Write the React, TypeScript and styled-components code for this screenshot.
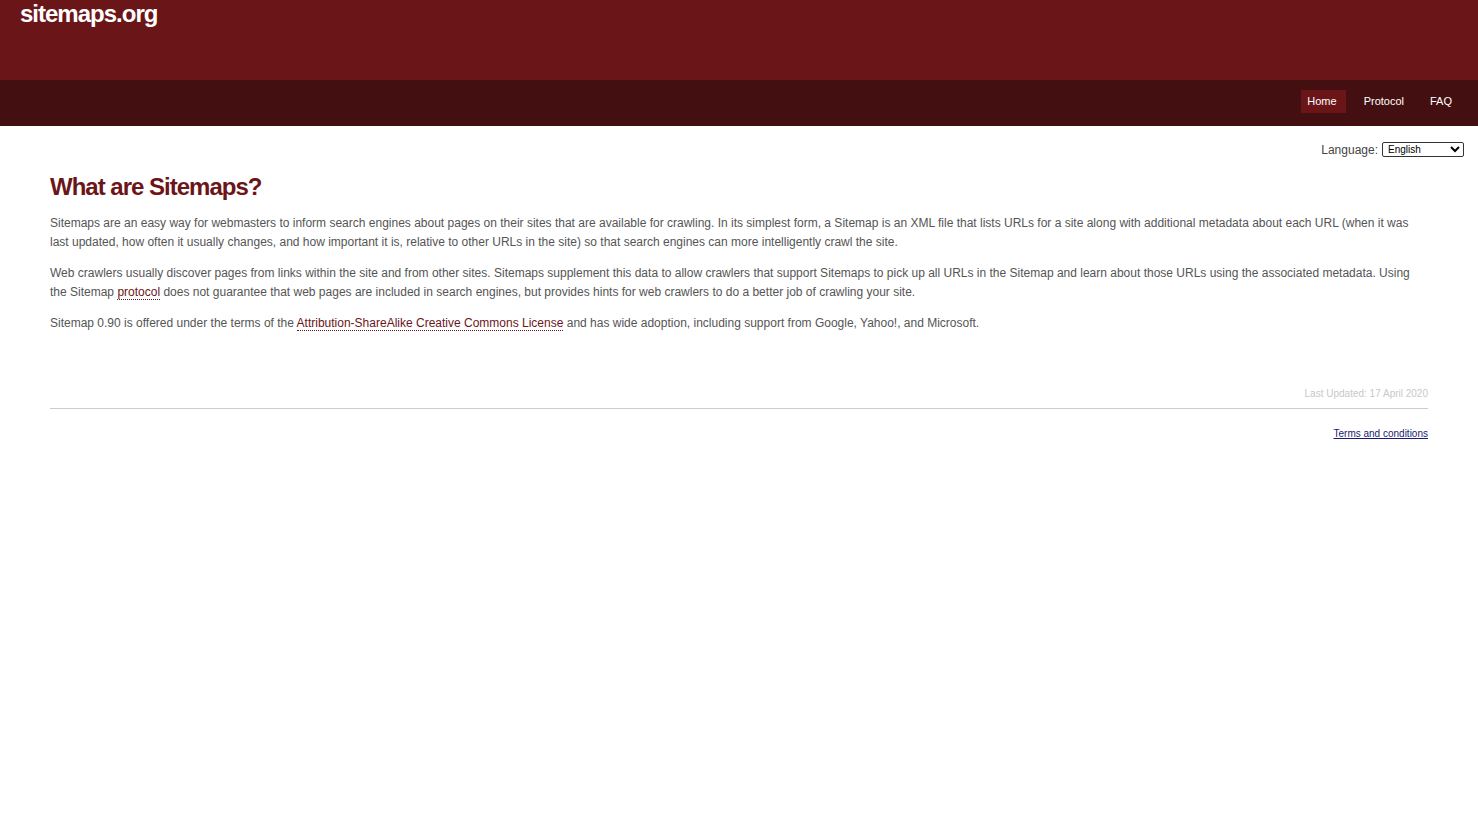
import React from "react";
import styled, { createGlobalStyle } from "styled-components";

const GlobalStyle = createGlobalStyle`
  body {
    margin: 0;
    background: #fff;
    font-family: "Liberation Sans", Arial, sans-serif;
  }
`;

const Header = styled.header`
  background: #6a1619;
  height: 80px;
  padding: 0 20px;
  box-sizing: border-box;
`;

const Logo = styled.div`
  color: #fff;
  font-size: 24px;
  font-weight: bold;
  letter-spacing: -1px;
  line-height: 28px;
`;

const NavBar = styled.nav`
  background: #440f11;
  height: 46px;
  box-sizing: border-box;
  display: flex;
  justify-content: flex-end;
  align-items: flex-start;
  padding: 10px 17px 0 0;
`;

const NavItem = styled.a<{ $active?: boolean; $gap?: number }>`
  font-size: 11px;
  color: #fff;
  text-decoration: none;
  padding: 5px 9px 6px 6px;
  margin-left: ${(p) => p.$gap ?? 0}px;
  line-height: 12px;
  background: ${(p) => (p.$active ? "#6a1619" : "transparent")};
`;

const LangRow = styled.div`
  display: flex;
  justify-content: flex-end;
  align-items: center;
  gap: 4px;
  padding: 16px 14px 0 0;
  font-size: 12px;
  color: #444;
`;

const LangSelect = styled.select`
  width: 82px;
  height: 15px;
  font-size: 10px;
  font-family: "Liberation Sans", Arial, sans-serif;
  padding: 0 0 0 1px;
  border: 1px solid #333;
  border-radius: 2px;
  background: #fff;
`;

const Main = styled.main`
  margin: 0 50px;
`;

const Title = styled.h1`
  color: #6b1519;
  font-size: 24px;
  letter-spacing: -1px;
  margin: 15px 0 12px;
  line-height: 30px;
`;

const Para = styled.p`
  font-size: 12px;
  line-height: 19px;
  color: #555;
  margin: 0 0 12px;
`;

const DotLink = styled.a`
  color: #6b1519;
  text-decoration: none;
  border-bottom: 1px dotted #6b1519;
`;

const Footer = styled.footer`
  margin-top: 55px;
`;

const Updated = styled.div`
  text-align: right;
  font-size: 10px;
  color: #c8c8c8;
  padding-bottom: 9px;
`;

const Rule = styled.hr`
  border: 0;
  border-top: 1px solid #ccc;
  margin: 0;
`;

const Terms = styled.div`
  text-align: right;
  font-size: 10px;
  padding-top: 19px;
  a {
    color: #1a1a6e;
  }
`;

export default function App() {
  return (
    <>
      <GlobalStyle />
      <Header>
        <Logo>sitemaps.org</Logo>
      </Header>
      <NavBar>
        <NavItem $active>Home</NavItem>
        <NavItem $gap={12}>Protocol</NavItem>
        <NavItem $gap={11}>FAQ</NavItem>
      </NavBar>
      <LangRow>
        Language:
        <LangSelect defaultValue="en">
          <option value="en">English</option>
        </LangSelect>
      </LangRow>
      <Main>
        <Title>What are Sitemaps?</Title>
        <Para>
          Sitemaps are an easy way for webmasters to inform search engines about pages on their sites that are
          available for crawling. In its simplest form, a Sitemap is an XML file that lists URLs for a site along
          with additional metadata about each URL (when it was last updated, how often it usually changes, and how
          important it is, relative to other URLs in the site) so that search engines can more intelligently crawl
          the site.
        </Para>
        <Para>
          Web crawlers usually discover pages from links within the site and from other sites. Sitemaps supplement
          this data to allow crawlers that support Sitemaps to pick up all URLs in the Sitemap and learn about those
          URLs using the associated metadata. Using the Sitemap <DotLink href="#">protocol</DotLink> does not
          guarantee that web pages are included in search engines, but provides hints for web crawlers to do a better
          job of crawling your site.
        </Para>
        <Para>
          Sitemap 0.90 is offered under the terms of the{" "}
          <DotLink href="#">Attribution-ShareAlike Creative Commons License</DotLink> and has wide adoption,
          including support from Google, Yahoo!, and Microsoft.
        </Para>
        <Footer>
          <Updated>Last Updated: 17 April 2020</Updated>
          <Rule />
          <Terms>
            <a href="#">Terms and conditions</a>
          </Terms>
        </Footer>
      </Main>
    </>
  );
}
